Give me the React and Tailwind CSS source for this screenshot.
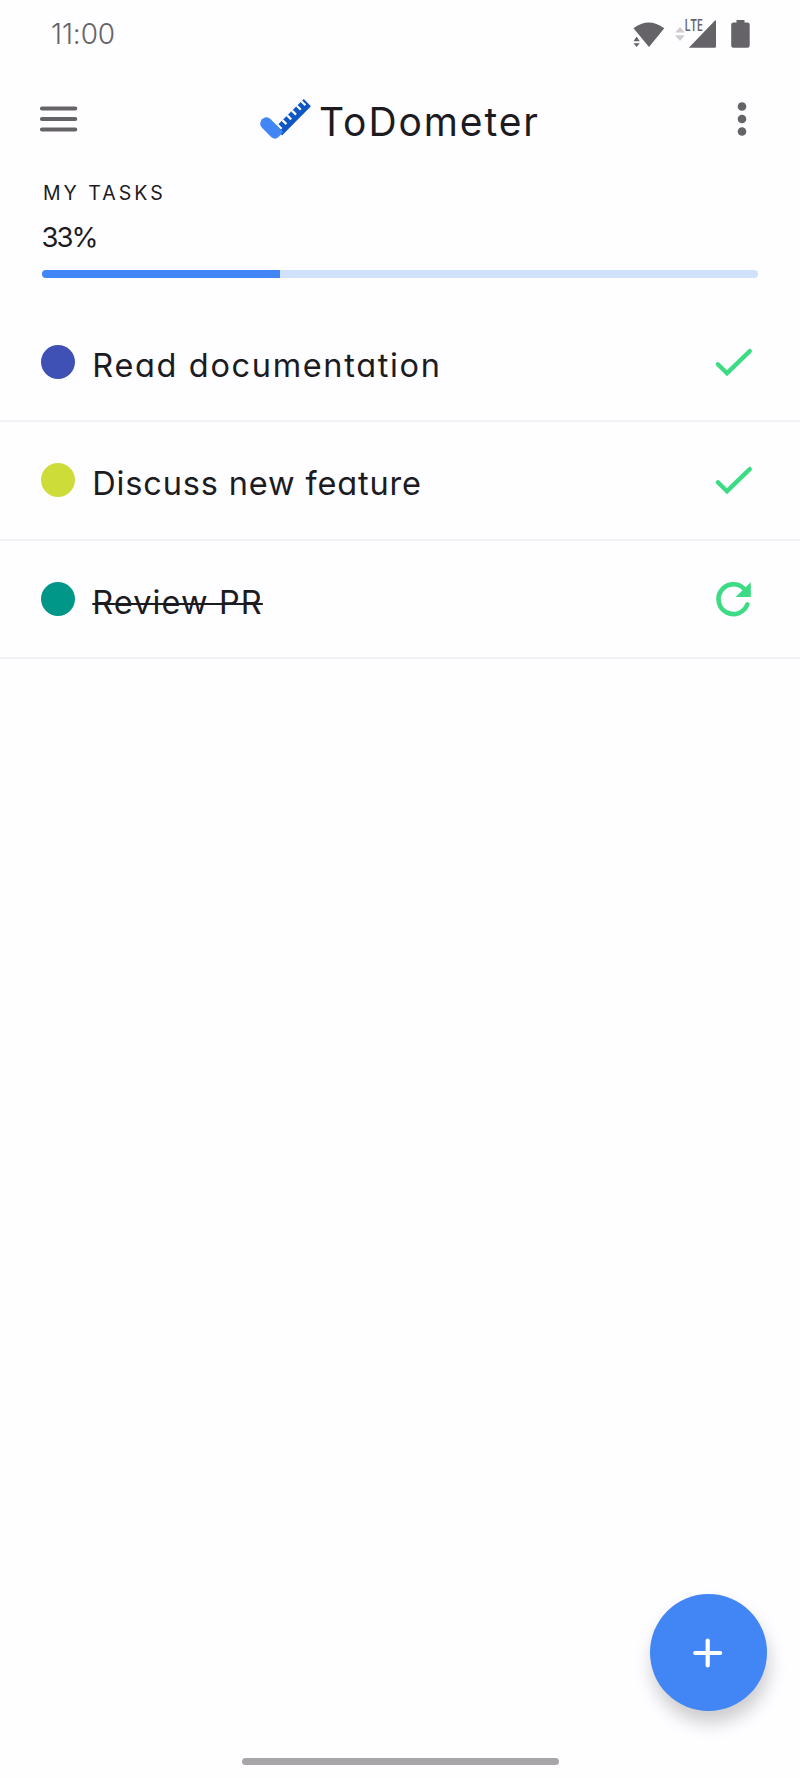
const tasks = [
  { title: 'Read documentation', dot: 'bg-[#3f51b5]', spacing: 'tracking-[1.65px]', done: false },
  { title: 'Discuss new feature', dot: 'bg-[#cddc39]', spacing: 'tracking-[0.85px]', done: false },
  { title: 'Review PR', dot: 'bg-[#009688]', spacing: 'tracking-[1.1px]', done: true },
];

function StatusIcons() {
  return (
    <svg width="120" height="42" viewBox="630 8 120 42" fill="#656367">
      <path d="M633.5 28.2Q648.5 16.8 664.3 28.2L649 47Z" />
      <path d="M633.5 41.2L636.6 36.4L639.8 41.2ZM633.5 43.2H639.8L636.6 47Z" />
      <path d="M675 32.5L680 27L684.8 32.5ZM675 35.3H684.8L680 41Z" fill="#cfcdd0" />
      <text x="684.5" y="30.7" fontFamily="Open Sans, sans-serif" fontSize="15.5" fontWeight="600" textLength="18.5" lengthAdjust="spacingAndGlyphs">LTE</text>
      <path d="M688.8 47.8L715 20.4Q716 19.8 716 21.2V46.6Q716 47.8 714.8 47.8Z" />
      <path d="M736.5 20H744.5V22.5H747.5Q749.7 22.5 749.7 24.7V45.5Q749.7 47.8 747.5 47.8H733.4Q731.2 47.8 731.2 45.5V24.7Q731.2 22.5 733.4 22.5H736.5Z" />
    </svg>
  );
}

function Logo() {
  return (
    <svg width="52" height="42" viewBox="260 97 52 42">
      <path d="M275.5 126L303.8 98L310.9 105.2L282 134.5Z" fill="#0d56c4" />
      <path d="M277.6 123.9l4 4M282.4 119.1l4 4M287.2 114.4l4 4M292 109.6l4 4M296.8 104.8l4 4M301.4 100.2l4 4" stroke="#fefdff" strokeWidth="2.2" />
      <path d="M262 118.2Q266.5 114.4 270.7 118.2L283.4 131.1L278.7 135.8Q275.3 139.2 271.4 136.3L262.2 127Q258.2 122.6 262 118.2Z" fill="#4285f4" />
    </svg>
  );
}

function CheckIcon() {
  return (
    <svg className="h-[50px] w-[50px]" viewBox="709 337.5 50 50" fill="none" stroke="#3ddc84" strokeWidth="4.4">
      <path d="M717.9 364.8L727 373.7L749.8 351.7" strokeLinecap="round" strokeLinejoin="miter" />
    </svg>
  );
}

function RefreshIcon() {
  return (
    <svg className="h-[50px] w-[50px]" viewBox="709 574.5 50 50">
      <path d="M747.4 604.8A14.9 14.9 0 1 1 743.4 588.6" fill="none" stroke="#3ddc84" strokeWidth="4.6" strokeLinecap="round" />
      <path d="M750.8 582.8V597.4H735.6Z" fill="#3ddc84" />
    </svg>
  );
}

function TaskRow({ task }) {
  return (
    <li className="flex h-[118.6px] items-center border-b-2 border-[#f3f1f4] pr-[41px] pl-[41.3px]">
      <span className={`h-[34px] w-[34px] rounded-full ${task.dot}`} />
      <span
        className={`ml-[17px] pt-[8px] text-[32.5px] leading-10 font-normal ${task.spacing} ${
          task.done ? 'line-through decoration-[2px]' : ''
        }`}
      >
        {task.title}
      </span>
      <button className="ml-auto">{task.done ? <RefreshIcon /> : <CheckIcon />}</button>
    </li>
  );
}

export default function App() {
  return (
    <div className="relative flex h-[1778px] w-[800px] flex-col overflow-hidden bg-[#fefdff] font-[Inter,sans-serif] text-[#1c1b1f] [font-feature-settings:'cv11']">
      <div className="flex h-[68px] items-start justify-between pt-[8px] pr-[50px] pl-[51px]">
        <span className="pt-[10px] text-[28px] leading-8 font-light tracking-[-0.1px] text-[#656367]">11:00</span>
        <StatusIcons />
      </div>

      <header className="flex h-[101px] items-center justify-between pr-[33px] pl-[33px]">
        <button>
          <svg width="50" height="50" viewBox="0 0 50 50" stroke="#656367" strokeWidth="4.2" strokeLinecap="round">
            <path d="M9 14.5H42.2M9 25H42.2M9 35.5H42.2" />
          </svg>
        </button>
        <div className="flex items-center gap-[7px]">
          <Logo />
          <h1 className="pt-[7px] text-[39px] leading-[48px] font-normal tracking-[1.9px]">ToDometer</h1>
        </div>
        <button>
          <svg width="50" height="50" viewBox="0 0 50 50" fill="#656367">
            <circle cx="25" cy="12.5" r="4.3" />
            <circle cx="25" cy="25" r="4.3" />
            <circle cx="25" cy="37.5" r="4.3" />
          </svg>
        </button>
      </header>

      <section className="flex h-[134.5px] flex-col pt-[12px] pr-[42px] pl-[41.5px]">
        <h2 className="pl-[1.5px] text-[19.5px] leading-6 font-normal tracking-[3px]">MY TASKS</h2>
        <p className="mt-[14px] text-[27.5px] leading-9 font-normal tracking-[-2px]">33%</p>
        <div className="mt-[15px] h-[8px] overflow-hidden rounded-full bg-[#d0e1fc]">
          <div className="h-full w-1/3 bg-[#4285f4]" />
        </div>
      </section>

      <ul>
        {tasks.map((task) => (
          <TaskRow key={task.title} task={task} />
        ))}
      </ul>

      <button className="absolute right-[33.5px] bottom-[67px] flex h-[117px] w-[117px] items-center justify-center rounded-full bg-[#4285f4] shadow-[2px_12px_18px_rgba(0,0,0,0.2)]">
        <svg width="50" height="50" viewBox="0 0 50 50" stroke="#ffffff" strokeWidth="4.2" strokeLinecap="round">
          <path d="M12.2 25H37.2M24.7 12.5V37.5" />
        </svg>
      </button>

      <div className="mx-auto mt-auto mb-[13px] h-[7px] w-[317px] rounded-full bg-[#a7a5a8]" />
    </div>
  );
}
